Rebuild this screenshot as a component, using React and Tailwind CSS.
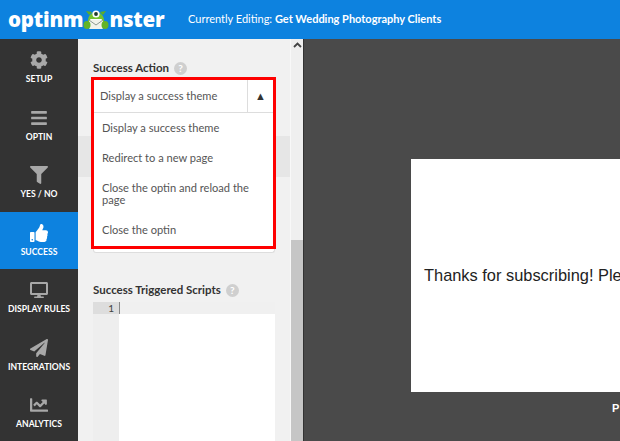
import {
  FaCog,
  FaBars,
  FaFilter,
  FaThumbsUp,
  FaDesktop,
  FaPaperPlane,
  FaChartLine,
} from "react-icons/fa";

const navItems = [
  { label: "SETUP", Icon: FaCog },
  { label: "OPTIN", Icon: FaBars },
  { label: "YES / NO", Icon: FaFilter },
  { label: "SUCCESS", Icon: FaThumbsUp, active: true },
  { label: "DISPLAY RULES", Icon: FaDesktop },
  { label: "INTEGRATIONS", Icon: FaPaperPlane },
  { label: "ANALYTICS", Icon: FaChartLine },
];

const options = [
  "Display a success theme",
  "Redirect to a new page",
  "Close the optin and reload the page",
  "Close the optin",
];

const Help = () => (
  <span className="w-[13px] h-[13px] rounded-full bg-[#cfcfcf] text-white text-[10px] font-bold leading-[13px] text-center">
    ?
  </span>
);

const Monster = () => (
  <svg width="26" height="24" viewBox="0 0 26 24" className="shrink-0 -mt-[4px]">
    <path d="M3 5 L6 9 L9 6 Z M23 5 L20 9 L17 6 Z" fill="#5fae24" />
    <path d="M5 16 C4 3 22 3 21 16 Z" fill="#74c42e" />
    <circle cx="13" cy="8" r="3.6" fill="#fff" />
    <circle cx="13" cy="8" r="1.9" fill="#1f3a2a" />
    <path d="M7 13 L19 13 L18 15 L8 15 Z" fill="#fff" />
    <rect x="6" y="14" width="14" height="9" rx="1" fill="#f2f2ea" />
    <path d="M6 14 L13 19 L20 14" fill="none" stroke="#8d9a92" strokeWidth="1" />
    <ellipse cx="4" cy="19" rx="3.5" ry="4" fill="#63b327" />
    <ellipse cx="22" cy="19" rx="3.5" ry="4" fill="#63b327" />
  </svg>
);

export default function App() {
  return (
    <div className="w-[620px] h-[441px] overflow-hidden flex flex-col font-['Lato',sans-serif]">
      <header className="h-[39px] shrink-0 bg-[#0d82df] flex items-center text-white">
        <div className="w-[188px] shrink-0 pl-[8px] flex items-center font-['Open_Sans',sans-serif] font-extrabold text-[20.5px] tracking-[-0.2px]">
          optinm
          <Monster />
          nster
        </div>
        <span className="text-[11px] whitespace-nowrap">
          Currently Editing: <b>Get Wedding Photography Clients</b>
        </span>
      </header>

      <div className="flex flex-1 min-h-0">
        <nav className="w-[78px] shrink-0 bg-[#333333] flex flex-col">
          {navItems.map(({ label, Icon, active }) => (
            <div
              key={label}
              className={`h-[57.5px] shrink-0 pt-[2px] flex flex-col items-center justify-center gap-[4px] text-white text-[8.6px] font-bold ${active ? "bg-[#0d82df]" : ""}`}
            >
              <Icon
                size={18}
                className={active ? "text-white" : "text-[#a8a8a8]"}
              />
              {label}
            </div>
          ))}
        </nav>

        <div className="w-[212px] shrink-0 bg-[#f1f1f1] pl-[15px] pr-[15px] pt-[21px] relative">
          <div className="absolute left-0 right-0 top-[97px] h-[41px] bg-[#e6e6e6]" />
          <div className="relative">
            <div className="flex items-center gap-[5px] text-[11.5px] font-bold text-[#333] h-[16px]">
              Success Action <Help />
            </div>
            <div className="mt-[1px] ml-[-2px] mr-[-1px] border-[3px] border-[#fe0000] bg-white text-[#555] text-[11.1px]">
              <div className="h-[33px] flex items-center border-b border-[#dddddd]">
                <span className="flex-1 pl-[6px]">Display a success theme</span>
                <span className="w-[26px] h-full border-l border-[#dddddd] flex items-center justify-center text-[11px] text-[#333]">
                  ▲
                </span>
              </div>
              <ul className="pl-[8px] pr-[12px] pb-[1px] leading-[12px]">
                {options.map((o) => (
                  <li key={o} className="py-[9px]">
                    {o}
                  </li>
                ))}
              </ul>
            </div>
            <div className="h-[4px] bg-white border border-t-0 border-[#dddddd] rounded-b-[3px]" />
            <div className="mt-[29px] flex items-center gap-[5px] text-[11.5px] font-bold text-[#333] h-[16px]">
              Success Triggered Scripts <Help />
            </div>
            <div className="mt-[4px] flex h-[140px] bg-white">
              <div className="w-[26px] bg-[#eeeeee]">
                <div className="h-[12px] bg-[#dddddd] text-[10px] text-[#444] text-right pr-[5px] leading-[12px]">
                  1
                </div>
              </div>
              <div className="flex-1">
                <div className="h-[12px] bg-[#f0f0f0] border-l border-[#888]" />
              </div>
            </div>
          </div>
        </div>

        <div className="w-[13px] shrink-0 bg-[#efefef] border-l border-[#f8f8f8] flex flex-col">
          <div className="h-[201px] flex justify-center pt-[3px]">
            <svg width="9" height="6" viewBox="0 0 9 6">
              <path d="M1 5 L4.5 1.5 L8 5" fill="none" stroke="#444" strokeWidth="1.8" />
            </svg>
          </div>
          <div className="flex-1 bg-[#c6c6c6]" />
        </div>

        <main className="flex-1 bg-[#4a4a4a] border-l border-[#333] pt-[120px] pl-[107px] overflow-hidden">
          <div className="w-[400px] h-[233px] bg-white flex items-center pl-[13px] text-[16.4px] text-[#222] whitespace-nowrap font-['Liberation_Sans',sans-serif]">
            Thanks for subscribing! Please check your email.
          </div>
          <div className="mt-[8px] pl-[201px] text-white font-bold text-[11px] font-['Liberation_Sans',sans-serif]">
            P
          </div>
        </main>
      </div>
    </div>
  );
}
